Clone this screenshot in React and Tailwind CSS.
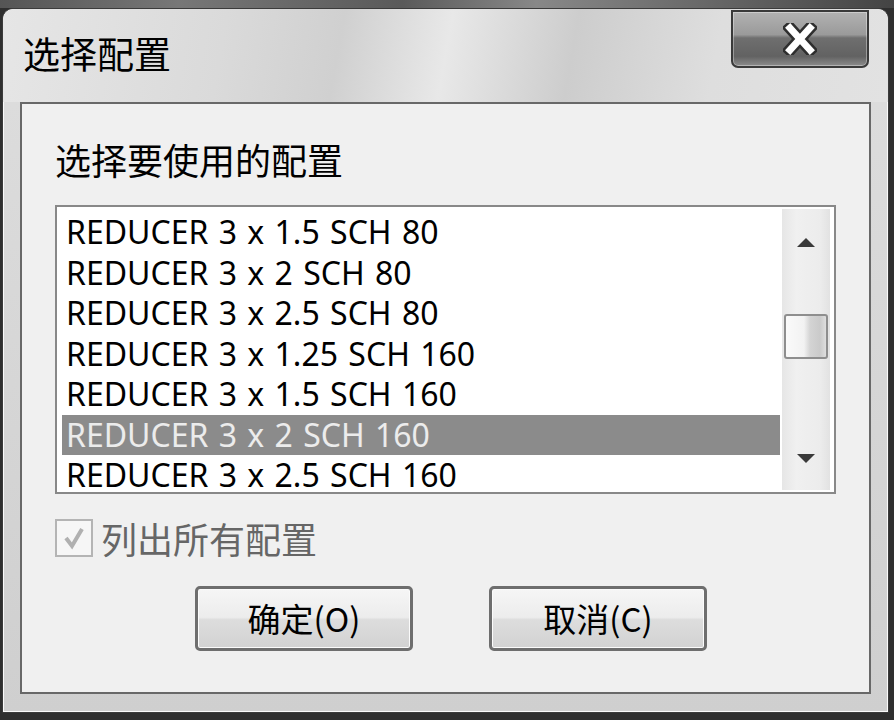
import React from "react";

const items = [
  "REDUCER 3 x 1.5 SCH 80",
  "REDUCER 3 x 2 SCH 80",
  "REDUCER 3 x 2.5 SCH 80",
  "REDUCER 3 x 1.25 SCH 160",
  "REDUCER 3 x 1.5 SCH 160",
  "REDUCER 3 x 2 SCH 160",
  "REDUCER 3 x 2.5 SCH 160",
];

const cjk = "font-['Noto_Sans_CJK_SC','Noto_Sans',sans-serif]";
const lat = "font-['Noto_Sans','Noto_Sans_CJK_SC',sans-serif]";

function CloseButton() {
  return (
    <div className="mt-[1px] w-[138px] h-[58px] rounded-b-[7px] border-2 border-[#3a3a3a] bg-[linear-gradient(to_bottom,#b2b2b2_0%,#9a9a9a_42%,#6f6f6f_48%,#626262_82%,#8c8c8c_100%)] flex items-center justify-center shadow-[inset_0_0_0_1px_rgba(255,255,255,0.35)]">
      <svg width="34" height="32" viewBox="0 0 34 32">
        <path d="M7 5 L27 27 M27 5 L7 27" stroke="#2e2e2e" strokeWidth="12" strokeLinecap="square" />
        <path d="M7 5 L27 27 M27 5 L7 27" stroke="#ffffff" strokeWidth="7" strokeLinecap="square" />
      </svg>
    </div>
  );
}

function Scrollbar() {
  return (
    <div className="w-[48px] h-full bg-[linear-gradient(to_right,#e6e6e6,#f0f0f0_30%,#ececec_80%,#e2e2e2)] flex flex-col items-center">
      <div className="h-[62px] w-full flex items-center justify-center pt-[4px]">
        <svg width="18" height="9" viewBox="0 0 18 9">
          <path d="M9 0 L18 9 L0 9 Z" fill="#3a3a3a" />
        </svg>
      </div>
      <div className="mt-[43px] w-[44px] h-[45px] rounded-[3px] border-2 border-[#8e8e8e] bg-[linear-gradient(to_right,#fafafa_0%,#f2f2f2_45%,#d4d4d4_60%,#cacaca_85%,#dedede_100%)]" />
      <div className="flex-1" />
      <div className="h-[48px] w-full flex items-start justify-center pt-[12px]">
        <svg width="18" height="9" viewBox="0 0 18 9">
          <path d="M0 0 L18 0 L9 9 Z" fill="#3a3a3a" />
        </svg>
      </div>
    </div>
  );
}

function Button({ children }) {
  return (
    <div className={`w-[218px] h-[65px] rounded-[5px] border-[3px] border-[#6e6e6e] bg-[linear-gradient(to_bottom,#f6f6f6_0%,#ececec_48%,#dddddd_52%,#d2d2d2_100%)] shadow-[inset_0_0_0_1px_#fbfbfb] flex items-center justify-center text-[33px] leading-none text-black ${cjk}`}>
      {children}
    </div>
  );
}

export default function App() {
  return (
    <div className="w-[894px] h-[720px] bg-[#2f2f2f] overflow-hidden relative">
      <div className="absolute left-0 top-0 w-full h-[8px] bg-[linear-gradient(to_right,#555,#777_20%,#5a5a5a_45%,#888_60%,#444_100%)]" />
      <div className="absolute left-[2px] top-[8px] w-[887px] h-[705px] rounded-t-[11px] border border-[#3b3b3b] shadow-[inset_0_0_0_1px_#fafafa] bg-[linear-gradient(to_bottom,#dedede,#cfcfcf)] flex flex-col">
        <div className="h-[93px] flex items-start justify-between pl-[20px] pr-[19px] bg-[linear-gradient(100deg,#e6e6e6_0%,#dadada_25%,#d0d0d0_38%,#e8e8e8_50%,#cdcdcd_64%,#dedede_80%,#e2e2e2_100%)] rounded-t-[11px]">
          <div className={`mt-[24px] text-[37px] leading-[40px] text-black ${cjk}`}>选择配置</div>
          <CloseButton />
        </div>
        <div className="mx-[17px] h-[592px] border-2 border-[#686868] bg-[#f0f0f0] flex flex-col pl-[33px] pr-[30px]">
          <div className={`mt-[35px] h-[40px] text-[36px] leading-[40px] text-black ${cjk}`}>选择要使用的配置</div>
          <div className="mt-[26px] w-[781px] h-[289px] border-2 border-[#888888] bg-white flex">
            <div className="flex-1 pt-[5px] pl-[5px] pr-[2px] overflow-hidden">
              {items.map((t, i) => (
                <div
                  key={t}
                  className={`h-[40.5px] pl-[4px] flex items-center text-[32px] leading-[36px] whitespace-nowrap [word-spacing:2px] ${lat} ${
                    i === 5 ? "bg-[#8b8b8b] text-[#ececec]" : "text-black"
                  }`}
                >
                  {t}
                </div>
              ))}
            </div>
            <div className="pt-[2px] pb-[2px] pr-[4px] h-full">
              <Scrollbar />
            </div>
          </div>
          <div className="mt-[24px] h-[39px] flex items-center gap-[8px]">
            <div className="w-[38px] h-[38px] border-2 border-[#b4b4b4] bg-[#f6f6f6] flex items-center justify-center">
              <svg width="26" height="26" viewBox="0 0 26 26">
                <path d="M5 13 L11 21 L21 4" stroke="#b0b0b0" strokeWidth="4" fill="none" />
              </svg>
            </div>
            <div className={`text-[36px] leading-[40px] text-[#666666] ${cjk}`}>列出所有配置</div>
          </div>
          <div className="mt-[29px] flex gap-[76px] pl-[140px]">
            <Button>确定(O)</Button>
            <Button>取消(C)</Button>
          </div>
        </div>
      </div>
    </div>
  );
}
